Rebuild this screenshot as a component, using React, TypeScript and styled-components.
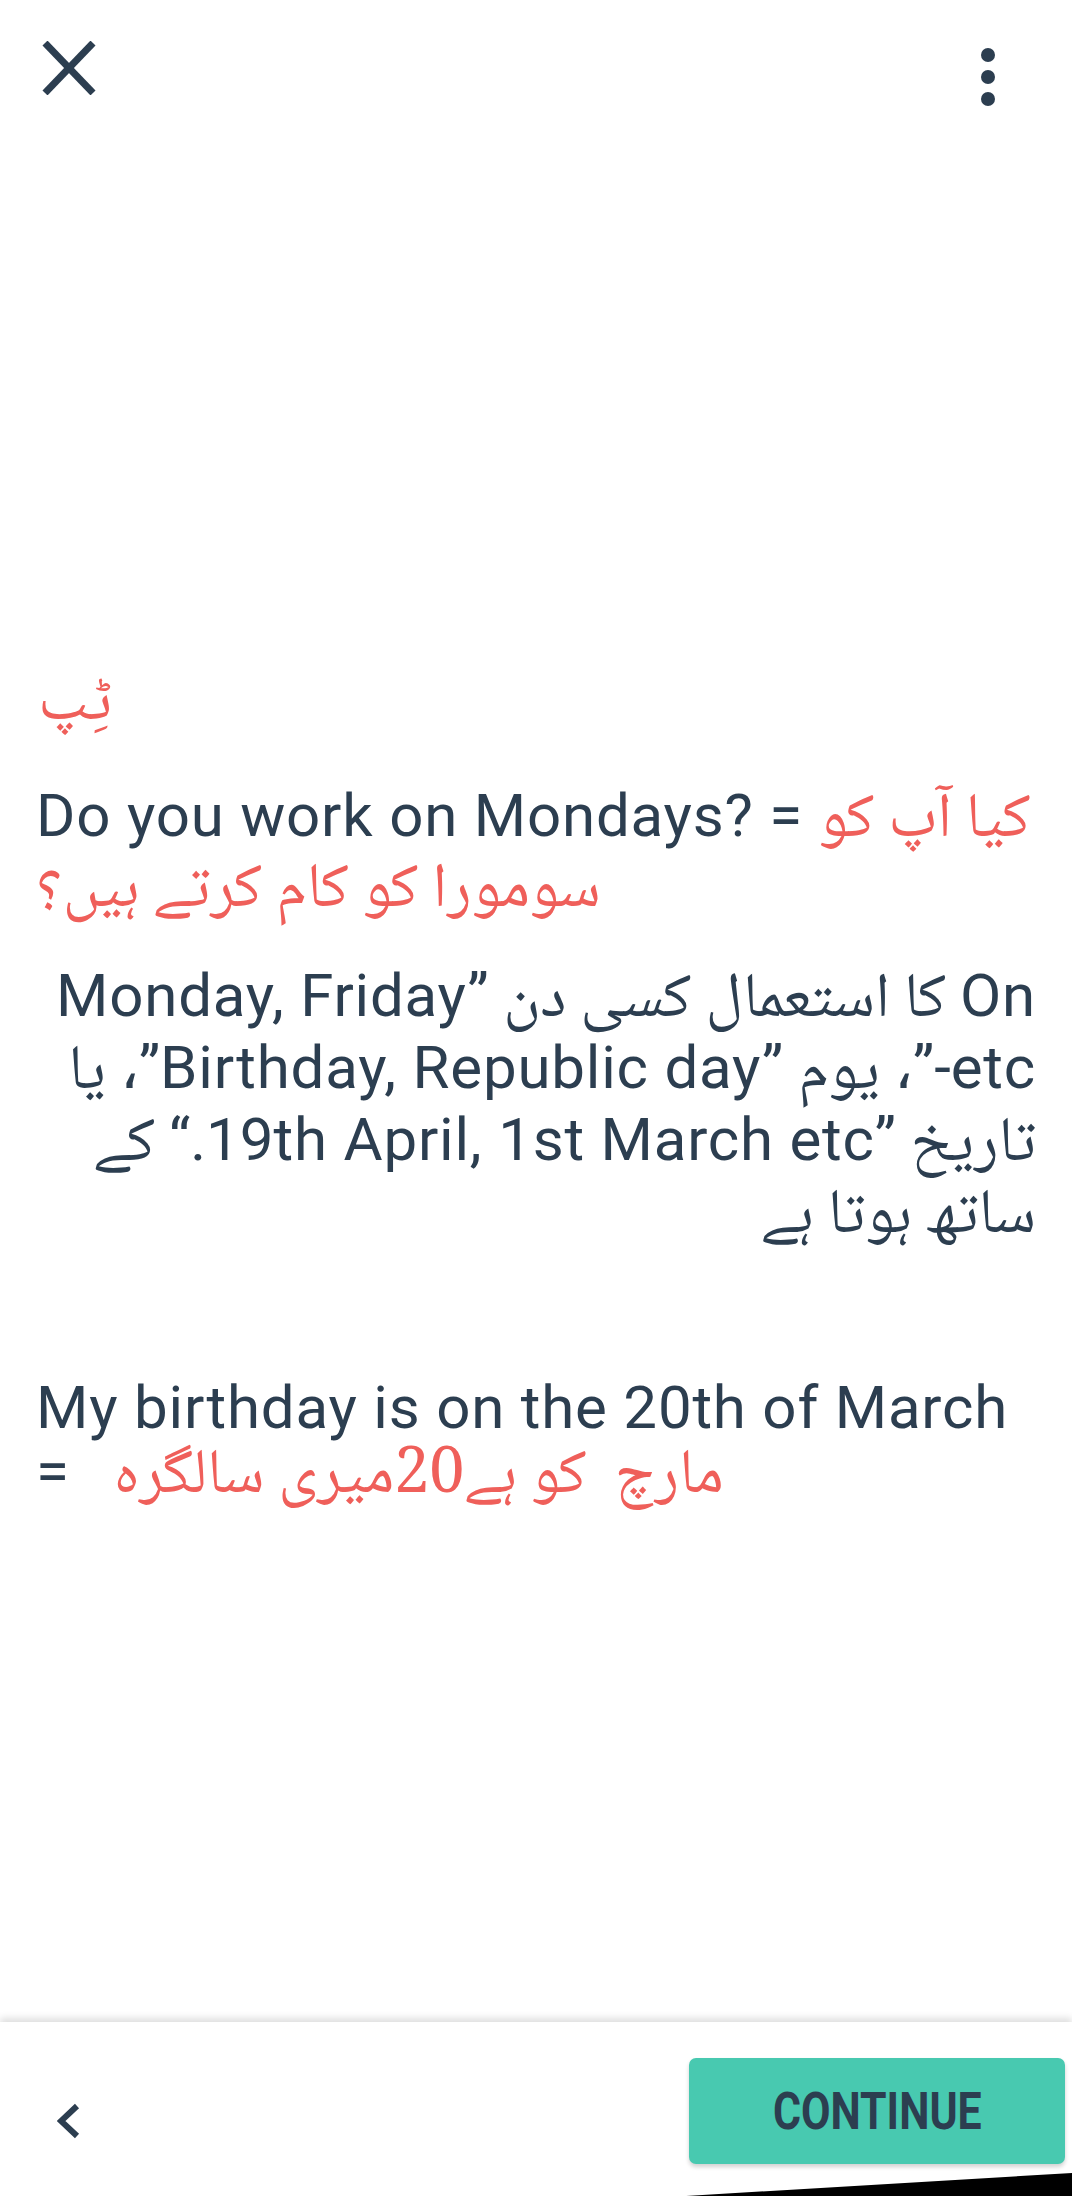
import React from "react";
import styled, { createGlobalStyle } from "styled-components";

const INK = "#2c3e50";
const CORAL = "#ef5f5a";
const TEAL = "#48c9b0";
const URDU_STACK = `"Noto Naskh Arabic", "Noto Sans Arabic", "DejaVu Sans", sans-serif`;

const GlobalStyle = createGlobalStyle`
  html, body {
    margin: 0;
    padding: 0;
    background: #ffffff;
  }
  body {
    font-family: Roboto, "DejaVu Sans", sans-serif;
    color: ${INK};
  }
`;

const Screen = styled.div`
  position: relative;
  width: 1072px;
  height: 2196px;
  display: flex;
  flex-direction: column;
  background: #ffffff;
  overflow: hidden;
`;

const TopBar = styled.header`
  box-sizing: border-box;
  height: 135px;
  padding: 41px 77px 0 41px;
  display: flex;
  justify-content: space-between;
  align-items: flex-start;
`;

const IconButton = styled.button<{ $offset?: number }>`
  border: 0;
  padding: 0;
  margin: ${(p) => p.$offset ?? 0}px 0 0 0;
  background: transparent;
  display: flex;
  cursor: pointer;
`;

const Content = styled.main`
  padding: 536px 36px 0 36px;
  display: flex;
  flex-direction: column;
`;

const Title = styled.div`
  font-family: ${URDU_STACK};
  font-size: 64px;
  line-height: 70px;
  color: ${CORAL};
  direction: rtl;
  text-align: left;
  margin-left: 2px;
`;

const Block = styled.section<{ $top: number; $lh: number }>`
  margin-top: ${(p) => p.$top}px;
  font-size: 60px;
  letter-spacing: 0.8px;
  line-height: ${(p) => p.$lh}px;
  color: ${INK};
`;

const Line = styled.div<{ $rtl?: boolean }>`
  white-space: pre;
  direction: ${(p) => (p.$rtl ? "rtl" : "ltr")};
  text-align: ${(p) => (p.$rtl ? "right" : "left")};
`;

const Urdu = styled.span<{ $accent?: boolean }>`
  font-family: ${URDU_STACK};
  font-size: 63px;
  line-height: 0;
  letter-spacing: 0;
  color: ${(p) => (p.$accent ? CORAL : INK)};
  direction: rtl;
  unicode-bidi: isolate;
`;

const Latin = styled.span`
  font-family: Roboto, sans-serif;
  direction: ltr;
  unicode-bidi: isolate;
`;

const Spacer = styled.div`
  flex: 1;
`;

const BottomBar = styled.footer`
  box-sizing: border-box;
  height: 174px;
  padding: 36px 7px 0 57px;
  display: flex;
  justify-content: space-between;
  align-items: flex-start;
  background: #ffffff;
  box-shadow: 0 -4px 7px rgba(0, 0, 0, 0.13);
`;

const BackButton = styled.button`
  border: 0;
  padding: 0;
  margin-top: 45px;
  background: transparent;
  display: flex;
`;

const ContinueButton = styled.button`
  width: 376px;
  height: 106px;
  border: 0;
  border-radius: 7px;
  background: ${TEAL};
  box-shadow: 0 3px 4px rgba(0, 0, 0, 0.18);
  display: flex;
  align-items: center;
  justify-content: center;
  cursor: pointer;
`;

const ContinueLabel = styled.span`
  display: inline-block;
  font-family: Roboto, sans-serif;
  font-weight: 700;
  font-size: 51px;
  color: ${INK};
  transform: scaleX(0.84);
  letter-spacing: 0;
`;

const PhotoEdge = styled.div`
  position: absolute;
  left: 0;
  right: 0;
  bottom: 0;
  height: 24px;
  background: #000000;
  clip-path: polygon(64% 100%, 100% 4%, 100% 100%);
`;

const CloseIcon = () => (
  <svg width="56" height="54" viewBox="0 0 56 54">
    <line x1="4" y1="2" x2="52" y2="52" stroke={INK} strokeWidth="7" />
    <line x1="52" y1="2" x2="4" y2="52" stroke={INK} strokeWidth="7" />
  </svg>
);

const MoreIcon = () => (
  <svg width="14" height="66" viewBox="0 0 14 66">
    <circle cx="7" cy="7" r="7" fill={INK} />
    <circle cx="7" cy="29" r="7" fill={INK} />
    <circle cx="7" cy="51" r="7" fill={INK} />
  </svg>
);

const BackIcon = () => (
  <svg width="24" height="36" viewBox="0 0 24 36">
    <polyline
      points="20,3 4,18 20,33"
      fill="none"
      stroke={INK}
      strokeWidth="6"
      strokeLinejoin="miter"
    />
  </svg>
);

export default function App() {
  return (
    <>
      <GlobalStyle />
      <Screen>
        <TopBar>
          <IconButton aria-label="close">
            <CloseIcon />
          </IconButton>
          <IconButton aria-label="more" $offset={7}>
            <MoreIcon />
          </IconButton>
        </TopBar>

        <Content>
          <Title>ٹِپ</Title>

          <Block $top={40} $lh={70}>
            <Line>
              {"Do you work on Mondays? = "}
              <Urdu $accent>کیا آپ کو</Urdu>
            </Line>
            <Line>
              <Urdu $accent>سومورا کو کام کرتے ہیں؟</Urdu>
            </Line>
          </Block>

          <Block $top={39} $lh={72}>
            <Line $rtl>
              <Latin>On</Latin>
              <Urdu>{" کا استعمال کسی دن "}</Urdu>
              <Latin>Monday, Friday”</Latin>
            </Line>
            <Line $rtl>
              <Latin>،”-etc</Latin>
              <Urdu>{" یوم "}</Urdu>
              <Latin>،”Birthday, Republic day”</Latin>
              <Urdu>{" یا"}</Urdu>
            </Line>
            <Line $rtl>
              <Urdu>{"تاریخ "}</Urdu>
              <Latin>“.19th April, 1st March etc”</Latin>
              <Urdu>{" کے"}</Urdu>
            </Line>
            <Line $rtl>
              <Urdu>ساتھ ہوتا ہے</Urdu>
            </Line>
          </Block>

          <Block $top={128} $lh={64}>
            <Line>My birthday is on the 20th of March</Line>
            <Line>
              {"=   "}
              <Urdu $accent>{"مارچ  کو ہے20میری سالگرہ"}</Urdu>
            </Line>
          </Block>
        </Content>

        <Spacer />

        <BottomBar>
          <BackButton aria-label="back">
            <BackIcon />
          </BackButton>
          <ContinueButton>
            <ContinueLabel>CONTINUE</ContinueLabel>
          </ContinueButton>
        </BottomBar>
        <PhotoEdge />
      </Screen>
    </>
  );
}
